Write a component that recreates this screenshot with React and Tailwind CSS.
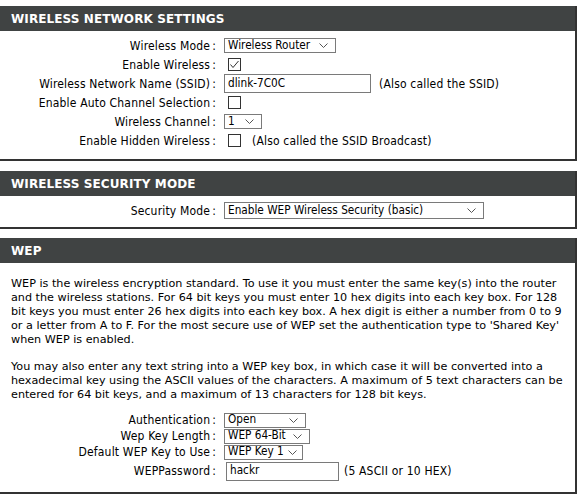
const body = { fontFamily: '"DejaVu Sans Condensed", "DejaVu Sans", sans-serif' };
const head = { fontFamily: '"DejaVu Sans", Verdana, sans-serif' };
const para = { fontFamily: '"DejaVu Sans", Verdana, sans-serif' };

function Chevron() {
  return (
    <svg width="9" height="5" viewBox="0 0 9 5" className="shrink-0">
      <path d="M0.5 0.5 L4.5 4.5 L8.5 0.5" fill="none" stroke="#555" strokeWidth="1" />
    </svg>
  );
}

function Select({ value, w, h = 'h-[15px]' }) {
  return (
    <div className={`flex items-center justify-between gap-[4px] whitespace-nowrap border border-[#7a7a7a] bg-white pl-[3px] pr-[7px] text-[11.7px] leading-none tracking-normal ${w} ${h}`}>
      <span>{value}</span>
      <Chevron />
    </div>
  );
}

function Check({ checked }) {
  return (
    <div className="ml-[4px] flex h-[13px] w-[13px] items-center justify-center border border-[#333] bg-white">
      {checked && (
        <svg width="11" height="11" viewBox="0 0 11 11">
          <path d="M1.5 5.5 L4 8.5 L9.5 2" fill="none" stroke="#333" strokeWidth="1" />
        </svg>
      )}
    </div>
  );
}

function Input({ value, w }) {
  return (
    <div className={`flex h-[19px] items-center border border-[#7a7a7a] bg-white px-[3px] text-[11.7px] leading-none tracking-normal ${w}`}>
      {value}
    </div>
  );
}

function Row({ label, h = 'h-[19px]', children }) {
  return (
    <div className={`flex items-center ${h}`}>
      <div className="w-[216px] text-right whitespace-nowrap">
        {label}
        <span className="ml-[2px]">:</span>
      </div>
      <div className="ml-[8px] flex items-center whitespace-nowrap">{children}</div>
    </div>
  );
}

function Section({ title, children }) {
  return (
    <div className="w-[577px] border-r-2 border-b-2 border-[#333]">
      <div className="flex h-[25px] items-center bg-[#404343] pl-[11px]">
        <h2 style={head} className="text-[12px] font-bold tracking-[0.1px] text-white">
          {title}
        </h2>
      </div>
      {children}
    </div>
  );
}

export default function App() {
  return (
    <div style={body} className="h-[500px] w-[579px] overflow-hidden bg-white pt-[6px] text-[12px] tracking-[0.18px] text-black">
      <Section title="WIRELESS NETWORK SETTINGS">
        <div className="pt-[5px] pb-[9px]">
          <Row label="Wireless Mode">
            <Select value="Wireless Router" w="w-[112px]" />
          </Row>
          <Row label="Enable Wireless">
            <Check checked />
          </Row>
          <Row label="Wireless Network Name (SSID)">
            <Input value="dlink-7C0C" w="w-[147px]" />
            <span className="ml-[8px]">(Also called the SSID)</span>
          </Row>
          <Row label="Enable Auto Channel Selection">
            <Check />
          </Row>
          <Row label="Wireless Channel">
            <Select value="1" w="w-[38px]" />
          </Row>
          <Row label="Enable Hidden Wireless">
            <Check />
            <span className="ml-[11px]">(Also called the SSID Broadcast)</span>
          </Row>
        </div>
      </Section>

      <div className="h-[10px]" />

      <Section title="WIRELESS SECURITY MODE">
        <div className="pt-[5px] pb-[7px]">
          <Row label="Security Mode">
            <Select value="Enable WEP Wireless Security (basic)" w="w-[260px]" h="h-[17px]" />
          </Row>
        </div>
      </Section>

      <div className="h-[9px]" />

      <Section title="WEP">
        <div className="pt-[14px] pb-[10px]">
          <p style={para} className="pl-[11px] text-[11.2px] leading-[14px] tracking-normal whitespace-nowrap">
            WEP is the wireless encryption standard. To use it you must enter the same key(s) into the router<br />
            and the wireless stations. For 64 bit keys you must enter 10 hex digits into each key box. For 128<br />
            bit keys you must enter 26 hex digits into each key box. A hex digit is either a number from 0 to 9<br />
            or a letter from A to F. For the most secure use of WEP set the authentication type to 'Shared Key'<br />
            when WEP is enabled.
          </p>
          <p style={para} className="mt-[13px] pl-[11px] text-[11.2px] leading-[14px] tracking-normal whitespace-nowrap">
            You may also enter any text string into a WEP key box, in which case it will be converted into a<br />
            hexadecimal key using the ASCII values of the characters. A maximum of 5 text characters can be<br />
            entered for 64 bit keys, and a maximum of 13 characters for 128 bit keys.
          </p>
          <div className="mt-[10px]">
            <Row label="Authentication" h="h-[16px]">
              <Select value="Open" w="w-[82px]" />
            </Row>
            <Row label="Wep Key Length" h="h-[16px]">
              <Select value="WEP 64-Bit" w="w-[86px]" />
            </Row>
            <Row label="Default WEP Key to Use" h="h-[16px]">
              <Select value="WEP Key 1" w="w-[79px]" />
            </Row>
            <Row label="WEPPassword" h="h-[22px]">
              <div className="ml-[2px]">
                <Input value="hackr" w="w-[113px]" />
              </div>
              <span className="ml-[5px]">(5 ASCII or 10 HEX)</span>
            </Row>
          </div>
        </div>
      </Section>
    </div>
  );
}
